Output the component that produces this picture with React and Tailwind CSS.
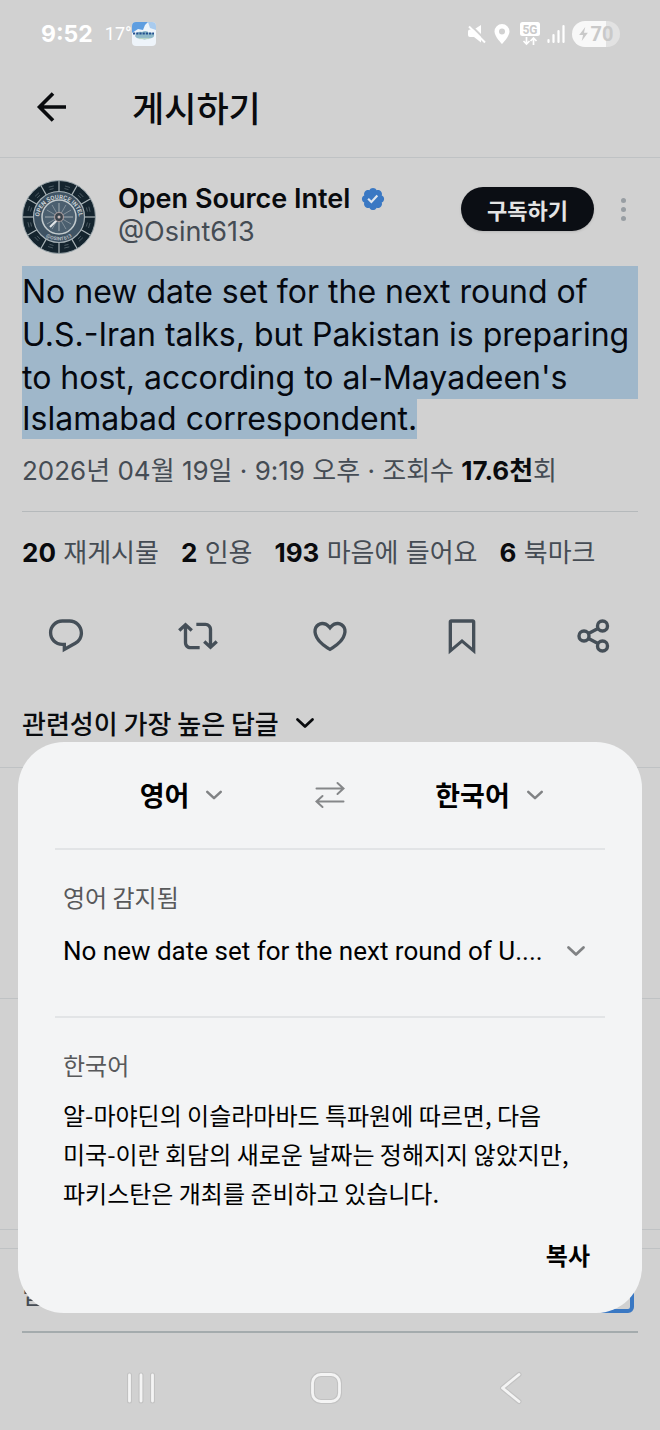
import React from "react";

const KR = "font-['Noto_Sans_CJK_KR',sans-serif]";
const LATIN = "font-[Inter,'Noto_Sans_CJK_KR',sans-serif]";
const SYSTEM = "font-[Roboto,'Noto_Sans_CJK_KR',sans-serif]";

function Chevron({ className }) {
  return (
    <svg viewBox="0 0 20 12" fill="none" className={className} aria-hidden="true">
      <path
        d="M2.5 2.5L10 9.5L17.5 2.5"
        stroke="currentColor"
        strokeWidth="2.8"
        strokeLinecap="round"
        strokeLinejoin="round"
      />
    </svg>
  );
}

function StatusBar() {
  return (
    <div className="h-16 pt-1 pl-[41px] pr-10 flex items-center justify-between text-white">
      <div className="flex items-center">
        <span className={`text-[23px] font-bold ${LATIN}`}>9:52</span>
        <span className={`ml-3 text-lg ${SYSTEM}`}>17°</span>
        {/* weather app */}
        <svg viewBox="0 0 24 24" className="w-6 h-6" aria-hidden="true">
          <rect width="24" height="24" rx="4" fill="#eef4fa" />
          <path d="M0 4a4 4 0 0 1 4-4h12l-3 3-2 5-5-1-6 4z" fill="#5f9ee0" />
          <path d="M16 0h4a4 4 0 0 1 4 4v4l-6-2z" fill="#a9cbee" />
          <path d="M3 14c1-4 4-5 7-4 3-2 6-1 7 1 3-1 6 1 5 3-1 3-5 2-7 3-3 1-5 0-6-1-3 1-5 0-6-2z" fill="#8fb9c9" />
          <path d="M1 11.5h21" stroke="#23508f" strokeWidth="2.2" strokeDasharray="2.2 1" />
          <path d="M7 16.500h10" stroke="#b9d6c6" strokeWidth="1.2" />
        </svg>
      </div>
      <div className="flex items-center">
        <svg viewBox="0 0 20 20" className="w-5 h-5" aria-hidden="true">
          <path d="M1 7.500a2 2 0 0 1 2-2h4L14 1v17.500L7 13H3a2 2 0 0 1-2-2z" fill="currentColor" />
          <path d="M3.500 1L20 17.500" stroke="#d1d1d1" strokeWidth="2.200" />
          <path d="M2 2.500L18 18.500" stroke="currentColor" strokeWidth="2" />
        </svg>
        <svg viewBox="0 0 16 20" className="ml-[7px] w-4 h-5" aria-hidden="true">
          <path
            d="M8 0a7.500 7.500 0 0 0-7.500 7.500C.5 12.500 8 20 8 20s7.500-7.500 7.500-12.500A7.500 7.500 0 0 0 8 0zm0 4.500a3 3 0 1 1 0 6 3 3 0 0 1 0-6z"
            fill="currentColor"
          />
        </svg>
        <svg viewBox="0 0 20 24" className="ml-[10px] w-5 h-6" aria-hidden="true">
          <rect width="20" height="14" rx="2.500" fill="currentColor" />
          <text
            x="10"
            y="11.500"
            textAnchor="middle"
            className={`text-[12px] font-bold ${SYSTEM}`}
            fill="#cbcbcb"
          >
            5G
          </text>
          <path
            d="M6.500 15v7M3.500 19l3 3 3-3M13.500 23v-7M10.500 19l3-3 3 3"
            fill="none"
            stroke="currentColor"
            strokeWidth="1.700"
          />
        </svg>
        <svg viewBox="0 0 18 20" className="ml-[7px] w-[18px] h-5" aria-hidden="true">
          <path
            d="M1.500 18v-2M6.500 18v-7M11.500 18V7M16.500 18V2"
            stroke="currentColor"
            strokeWidth="2.200"
            strokeLinecap="round"
          />
        </svg>
        <div className="ml-[7px] h-[26px] w-12 rounded-full bg-[linear-gradient(90deg,#f8f8f8_70%,#e2e2e2_70%)] flex items-center justify-center gap-[3px] text-[#c9c9c9]">
          <svg viewBox="0 0 10 16" className="w-[9px] h-[14px]" aria-hidden="true">
            <path d="M7 0L0 9h4.500L3 16l7-9.500H5.500z" fill="currentColor" />
          </svg>
          <span className={`text-xl font-bold ${SYSTEM}`}>70</span>
        </div>
      </div>
    </div>
  );
}

function Avatar() {
  const angles = [0, 30, 60, 90, 120, 150, 180, 210, 240, 270, 300, 330];
  return (
    <svg viewBox="0 0 74 74" className="w-[74px] h-[74px] shrink-0" role="img" aria-label="Open Source Intel">
      <defs>
        <path id="ringTop" d="M17 39a20 20 0 1 1 40 0" />
        <path id="ringBottom" d="M13.500 37a23.500 23.500 0 0 0 47 0" />
      </defs>
      <circle cx="37" cy="37" r="36.500" fill="#14242e" stroke="#9aa5aa" strokeWidth="1" />
      {angles.map((a) => (
        <g key={a} transform={`rotate(${a} 37 37)`}>
          <path d="M37 1v11" stroke="#aab4b8" strokeWidth="1.200" />
          <path d="M43 6l5 1.500M42.500 8.500l4 1.200" stroke="#55646c" strokeWidth=".8" />
        </g>
      ))}
      <circle cx="37" cy="37" r="25.500" fill="#3f5363" stroke="#a6b1b6" strokeWidth="1.200" />
      <circle cx="37" cy="37" r="17" fill="#4b5f6f" stroke="#c2cacd" strokeWidth="1.500" />
      <text className={`text-[6px] font-bold ${SYSTEM}`} fill="#c9d0d3">
        <textPath href="#ringTop" startOffset="50%" textAnchor="middle">
          OPEN SOURCE INTEL
        </textPath>
      </text>
      <text className={`text-[5px] font-bold ${SYSTEM}`} fill="#b4bdc2">
        <textPath href="#ringBottom" startOffset="50%" textAnchor="middle">
          @OSINT613
        </textPath>
      </text>
      {angles.map((a) => (
        <path
          key={a}
          d="M37 34V23"
          stroke="#8a979f"
          strokeWidth={a % 90 === 0 ? 1.4 : 0.8}
          transform={`rotate(${a} 37 37)`}
        />
      ))}
      <path d="M35 40l-7 7" stroke="#e4e8ea" strokeWidth="2" />
      <circle cx="37" cy="37" r="4.500" fill="#39434c" stroke="#a69a9c" strokeWidth="1.200" />
      <circle cx="37" cy="37" r="1.500" fill="#c7b7b7" />
    </svg>
  );
}

function VerifiedBadge() {
  return (
    <svg viewBox="0 0 22 22" className="w-[26px] h-[26px]" role="img" aria-label="Verified">
      <path
        fill="#3a78c3"
        d="M20.396 11c-.018-.646-.215-1.275-.57-1.816-.354-.54-.852-.972-1.438-1.246.223-.607.27-1.264.14-1.897-.131-.634-.437-1.218-.882-1.687-.47-.445-1.053-.75-1.687-.882-.633-.13-1.290-.083-1.897.14-.273-.587-.704-1.086-1.245-1.440S11.647 1.620 11 1.604c-.646.017-1.273.213-1.813.568s-.969.854-1.240 1.440c-.608-.223-1.267-.272-1.902-.140-.635.130-1.220.436-1.690.882-.445.470-.749 1.055-.878 1.688-.130.633-.080 1.290.144 1.896-.587.274-1.087.705-1.443 1.245-.356.540-.555 1.170-.574 1.817.020.647.218 1.276.574 1.817.356.540.856.972 1.443 1.245-.224.606-.274 1.263-.144 1.896.130.634.433 1.218.877 1.688.470.443 1.054.747 1.687.878.633.132 1.290.084 1.897-.136.274.586.705 1.084 1.246 1.439.540.354 1.170.551 1.816.569.647-.016 1.276-.213 1.817-.567s.972-.854 1.245-1.440c.604.239 1.266.296 1.903.164.636-.132 1.220-.447 1.680-.907.460-.460.776-1.044.908-1.681s.075-1.299-.165-1.903c.586-.274 1.084-.705 1.439-1.246.354-.540.551-1.170.569-1.816z"
      />
      <path fill="#dfe6ee" d="M9.662 14.850l-3.429-3.428 1.293-1.302 2.072 2.072 4.400-4.794 1.347 1.246z" />
    </svg>
  );
}

const actions = [
  {
    label: "답글",
    path: "M1.751 10c0-4.420 3.584-8 8.005-8h4.366c4.490 0 8.129 3.640 8.129 8.130 0 2.960-1.607 5.680-4.196 7.110l-8.054 4.460v-3.690h-.067c-4.490.100-8.183-3.510-8.183-8.010zm8.005-6c-3.317 0-6.005 2.690-6.005 6 0 3.370 2.770 6.080 6.138 6.010l.351-.010h1.761v2.300l5.087-2.810c1.951-1.080 3.163-3.130 3.163-5.360 0-3.390-2.744-6.130-6.129-6.130H9.756z",
  },
  {
    label: "재게시",
    path: "M4.500 3.880l4.432 4.140-1.364 1.460L5.500 7.550V16c0 1.100.896 2 2 2H13v2H7.500c-2.209 0-4-1.790-4-4V7.550L1.432 9.480.068 8.020 4.500 3.880zM16.500 6H11V4h5.500c2.209 0 4 1.790 4 4v8.450l2.068-1.930 1.364 1.460-4.432 4.140-4.432-4.140 1.364-1.460 2.068 1.930V8c0-1.100-.896-2-2-2z",
  },
  {
    label: "마음에 들어요",
    path: "M16.697 5.500c-1.222-.060-2.679.510-3.890 2.160l-.805 1.090-.806-1.090C9.984 6.010 8.526 5.440 7.304 5.500c-1.243.070-2.349.780-2.910 1.910-.552 1.120-.633 2.780.479 4.820 1.074 1.970 3.257 4.270 7.129 6.610 3.870-2.340 6.052-4.640 7.126-6.610 1.111-2.040 1.030-3.700.477-4.820-.561-1.130-1.666-1.840-2.908-1.910zm4.187 7.690c-1.351 2.480-4.001 5.120-8.379 7.670l-.503.300-.504-.300c-4.379-2.550-7.029-5.190-8.382-7.670-1.360-2.500-1.410-4.860-.514-6.670.887-1.790 2.647-2.910 4.601-3.010 1.651-.090 3.368.560 4.798 2.010 1.429-1.450 3.146-2.100 4.796-2.010 1.954.100 3.714 1.220 4.601 3.010.896 1.810.846 4.170-.514 6.670z",
  },
  {
    label: "북마크",
    path: "M4 3.500C4 2.670 4.670 2 5.500 2h13C19.330 2 20 2.670 20 3.500v19.440l-8-6.800-8 6.800V3.500zM6 4v14.900l6-5.100 6 5.100V4H6z",
  },
  { label: "공유", share: true },
];

function ActionIcon({ action }) {
  if (action.share) {
    return (
      <svg viewBox="0 0 40 40" fill="none" stroke="currentColor" strokeWidth="3.400" className="w-10 h-10" aria-hidden="true">
        <circle cx="10" cy="20" r="5" />
        <circle cx="28.500" cy="10" r="5" />
        <circle cx="28.500" cy="30" r="5" />
        <path d="M14.500 17.500L24 12.500M14.500 22.500L24 27.500" />
      </svg>
    );
  }
  return (
    <svg viewBox="0 0 24 24" fill="currentColor" className="w-10 h-10" aria-hidden="true">
      <path d={action.path} />
    </svg>
  );
}

const stats = [
  { value: "20", label: "재게시물" },
  { value: "2", label: "인용" },
  { value: "193", label: "마음에 들어요" },
  { value: "6", label: "북마크" },
];

function Post() {
  return (
    <article>
      <div className="px-[22px] pt-[22px]">
        <div className="flex items-center">
          <Avatar />
          <div className={`mb-1 ml-[22px] flex-1 min-w-0 text-[27px] leading-[33px] ${LATIN}`}>
            <div className="flex items-center gap-[10px]">
              <span className="whitespace-nowrap font-semibold text-[#090b0e]">Open Source Intel</span>
              <VerifiedBadge />
            </div>
            <div className="text-[#454c54]">@Osint613</div>
          </div>
          <button
            type="button"
            className={`mb-4 h-11 w-[133px] rounded-full bg-[#0b0e14] text-[22px] font-bold text-[#e4e4e4] shadow-sm ${KR}`}
          >
            구독하기
          </button>
          <button type="button" aria-label="더 보기" className="mb-4 ml-[27px] mr-3 flex flex-col gap-1 text-[#989ea3]">
            <span className="w-[5px] h-[5px] rounded-full bg-current" />
            <span className="w-[5px] h-[5px] rounded-full bg-current" />
            <span className="w-[5px] h-[5px] rounded-full bg-current" />
          </button>
        </div>

        {/* selected text */}
        <p className={`mt-3 text-[32px] text-[#05080f] ${LATIN}`}>
          <span className="block bg-[#9fb7ca] pt-1 leading-[43px]">
            No new date set for the next round of
            <br />
            U.S.-Iran talks, but Pakistan is preparing
            <br />
            to host, according to al-Mayadeen's
          </span>
          <span className="inline-block bg-[#9fb7ca] leading-10 align-top">Islamabad correspondent.</span>
        </p>

        <div className={`mt-1 pb-5 border-b border-[#b5b9bb] text-[26px] leading-10 text-[#454c54] ${LATIN}`}>
          2026년 04월 19일 · 9:19 오후 · 조회수 <b className="text-[#090b0e]">17.6천</b>회
        </div>

        <div className={`flex gap-[22px] pt-[21px] text-[26px] leading-10 text-[#454c54] ${LATIN}`}>
          {stats.map((s) => (
            <span key={s.label} className="whitespace-nowrap">
              <b className="text-[#090b0e]">{s.value}</b> {s.label}
            </span>
          ))}
        </div>
      </div>

      <div className="mt-[43px] grid grid-cols-5 text-[#454f58]">
        {actions.map((a) => (
          <button key={a.label} type="button" aria-label={a.label} className="flex justify-center">
            <ActionIcon action={a} />
          </button>
        ))}
      </div>
    </article>
  );
}

function TranslatePanel() {
  return (
    <section className={`absolute inset-x-[18px] bottom-[117px] rounded-[46px] bg-[#f3f4f5] px-[37px] text-black ${KR}`}>
      <div className="h-[108px] grid grid-cols-[1fr_60px_1fr] items-center border-b-2 border-[#e2e4e6] text-[27px] font-bold">
        <button type="button" className="flex items-center justify-center gap-4 pl-2">
          영어
          <Chevron className="w-[18px] h-3 text-[#808284]" />
        </button>
        <button type="button" aria-label="언어 바꾸기" className="flex justify-center text-[#858789]">
          <svg viewBox="0 0 30 30" fill="none" stroke="currentColor" strokeWidth="2" strokeLinecap="round" className="w-[30px] h-[30px]">
            <path d="M1.500 8.500H28M22.500 3L28.500 8.500L22.500 14M28.500 21.500H2M7.500 16L1.500 21.500L7.500 27" />
          </svg>
        </button>
        <button type="button" className="flex items-center justify-center gap-4 pl-3.5">
          한국어
          <Chevron className="w-[18px] h-3 text-[#808284]" />
        </button>
      </div>

      <div className="h-[168px] border-b-2 border-[#e2e4e6] px-2 pt-[27px]">
        <div className="text-2xl leading-10 text-[#58595b]">영어 감지됨</div>
        <button type="button" className="mt-3.5 w-full flex items-center text-left">
          <span className={`flex-1 whitespace-nowrap text-[26px] leading-10 ${SYSTEM}`}>
            No new date set for the next round of U....
          </span>
          <Chevron className="mr-[11px] w-5 h-3 text-[#808284]" />
        </button>
      </div>

      <div className="px-2 pt-[27px] pb-[38px]">
        <div className="text-2xl leading-10 text-[#58595b]">한국어</div>
        <p className="mt-2.5 text-2xl leading-[39px]">
          알-마야딘의 이슬라마바드 특파원에 따르면, 다음
          <br />
          미국-이란 회담의 새로운 날짜는 정해지지 않았지만,
          <br />
          파키스탄은 개최를 준비하고 있습니다.
        </p>
        <div className="mt-[23px] flex justify-end pr-[7px]">
          <button type="button" className="text-2xl leading-10 font-bold">
            복사
          </button>
        </div>
      </div>
    </section>
  );
}

function NavBar() {
  return (
    <nav className="mt-auto h-[84px] pt-6 grid grid-cols-3 text-[#f4f4f4] pl-12 pr-14">
      <button type="button" aria-label="최근 앱" className="flex justify-center">
        <svg viewBox="0 0 36 36" fill="none" strokeLinecap="round" className="w-9 h-9">
          <path d="M6.500 5v26M18 5v26M29.500 5v26" stroke="#c2c2c2" strokeWidth="5" />
          <path d="M6.500 5v26M18 5v26M29.500 5v26" stroke="currentColor" strokeWidth="2.800" />
        </svg>
      </button>
      <button type="button" aria-label="홈" className="flex justify-center">
        <svg viewBox="0 0 36 36" fill="none" className="w-9 h-9">
          <rect x="4.500" y="4.500" width="27" height="27" rx="8.500" stroke="#c2c2c2" strokeWidth="5" />
          <rect x="4.500" y="4.500" width="27" height="27" rx="8.500" stroke="currentColor" strokeWidth="2.800" />
        </svg>
      </button>
      <button type="button" aria-label="뒤로" className="flex justify-center">
        <svg viewBox="0 0 36 36" fill="none" strokeLinecap="round" strokeLinejoin="round" className="w-9 h-9">
          <path d="M26 4.500L9.500 18L26 31.500" stroke="#c2c2c2" strokeWidth="5" />
          <path d="M26 4.500L9.500 18L26 31.500" stroke="currentColor" strokeWidth="2.800" />
        </svg>
      </button>
    </nav>
  );
}

export default function App() {
  return (
    <main className="relative min-h-screen flex flex-col bg-[#d1d1d1]">
      <StatusBar />

      <header className="h-[94px] flex items-center pl-9 pb-2 border-b border-[#bfc2c4]">
        <button type="button" aria-label="뒤로" className="text-[#090b0e]">
          <svg viewBox="0 0 32 32" fill="none" stroke="currentColor" strokeWidth="3.600" className="w-8 h-8">
            <path d="M30 16H4M17 2.500L3.500 16L17 29.500" />
          </svg>
        </button>
        <h1 className={`ml-16 text-[35px] leading-none font-medium text-[#090b0e] ${KR}`}>게시하기</h1>
      </header>

      <Post />

      <button
        type="button"
        className={`mt-[47px] pl-[22px] pb-6 flex items-center gap-4 border-b border-[#bfc2c4] text-[26px] leading-10 font-medium text-[#090b0e] ${KR}`}
      >
        관련성이 가장 높은 답글
        <Chevron className="w-5 h-3" />
      </button>

      {/* replies */}
      <div className="h-[231px] border-b border-[#bfc2c4]" />
      <div className="h-[231px] border-b border-[#bfc2c4]" />
      <div className="h-[19px] border-b border-[#bfc2c4]" />

      <div className="mx-[22px] mt-6 h-[60px] flex items-start justify-between border-b-2 border-[#a4abad]">
        <span className={`text-[26px] leading-10 text-[#454c54] ${KR}`}>답글 게시하기</span>
        <span className="mr-1 mt-1 w-9 h-9 border-4 border-[#3a78c3] rounded-md" />
      </div>

      <NavBar />

      <TranslatePanel />
    </main>
  );
}
